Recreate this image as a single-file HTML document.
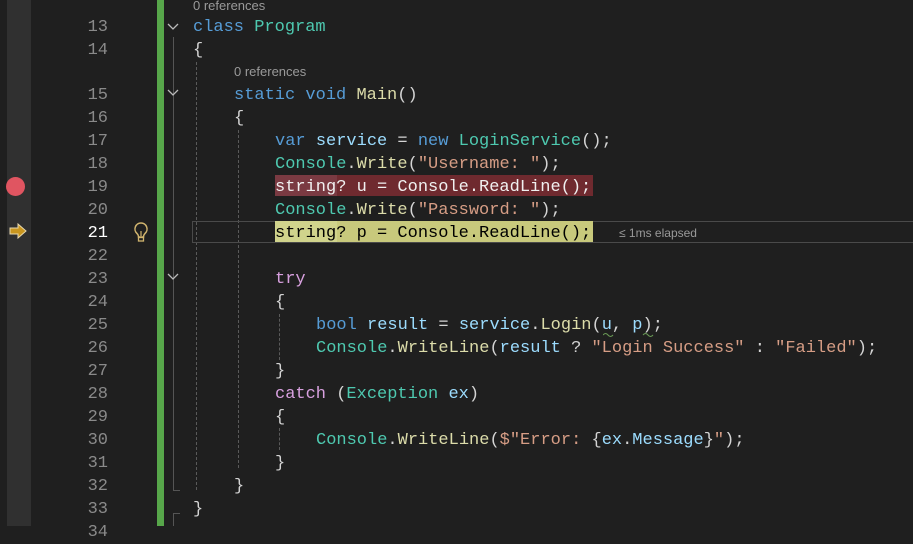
<!DOCTYPE html>
<html><head><meta charset="utf-8"><style>
html,body{margin:0;padding:0;width:913px;height:526px;overflow:hidden;background:#1f1f1f;}
.a{position:absolute}
.ln{position:absolute;left:60px;width:48px;text-align:right;font:17px/23px "Liberation Mono",monospace;color:#8a8a8a}
.c{position:absolute;font:17px/23px "Liberation Mono",monospace;color:#d4d4d4;white-space:pre}
.k{color:#569cd6}.t{color:#4ec9b0}.m{color:#dcdcaa}.s{color:#d69d85}.v{color:#9cdcfe}.p{color:#d8a0df}
.ref{position:absolute;font:13px "Liberation Sans",sans-serif;color:#9a9a9a}
.g{position:absolute;width:0;border-left:1px dashed #5a5a5a}
.chev{position:absolute;left:167px;width:12px;height:8px}
</style></head><body>
<div class="a" style="left:7px;top:0;width:24px;height:526px;background:#303030"></div>
<div class="a" style="left:157px;top:0;width:7px;height:526px;background:#57a64a"></div>

<div class="a" style="left:173px;top:37px;width:1px;height:454px;background:#555"></div>
<div class="a" style="left:173px;top:490px;width:7px;height:1px;background:#555"></div>
<div class="a" style="left:173px;top:513px;width:7px;height:1px;background:#555"></div>
<div class="a" style="left:173px;top:513px;width:1px;height:13px;background:#555"></div>

<svg class="chev" style="top:23px" viewBox="0 0 12 8"><path d="M1 1 L6 6 L11 1" fill="none" stroke="#bbb" stroke-width="1.3"/></svg>
<svg class="chev" style="top:89px" viewBox="0 0 12 8"><path d="M1 1 L6 6 L11 1" fill="none" stroke="#bbb" stroke-width="1.3"/></svg>
<svg class="chev" style="top:273px" viewBox="0 0 12 8"><path d="M1 1 L6 6 L11 1" fill="none" stroke="#bbb" stroke-width="1.3"/></svg>

<div class="g" style="left:196px;top:62px;height:428px"></div>
<div class="g" style="left:238px;top:130px;height:338px"></div>
<div class="g" style="left:279px;top:314px;height:46px"></div>
<div class="g" style="left:279px;top:428px;height:22px"></div>

<div class="a" style="left:6px;top:177px;width:19px;height:19px;border-radius:50%;background:#e05561"></div>
<svg class="a" style="left:9px;top:223px" width="19" height="16" viewBox="0 0 19 16"><path d="M1 5 H9 V1 L17 8 L9 15 V11 H1 Z" fill="#c9961f" stroke="#e8d9b0" stroke-width="1"/></svg>
<svg class="a" style="left:132px;top:221px" width="18" height="22" viewBox="0 0 18 22"><path d="M9 2 a6 6 0 0 0-4 10.5 c1 1 1.5 2 1.5 3.5 h5 c0-1.5 .5-2.5 1.5-3.5 A6 6 0 0 0 9 2z" fill="none" stroke="#d0b46e" stroke-width="1.5"/><rect x="6.5" y="16.5" width="5" height="3.5" fill="none" stroke="#d0b46e" stroke-width="1.3"/><path d="M9 15 V10" stroke="#d0b46e" stroke-width="1.2"/></svg>

<div class="a" style="left:192px;top:221px;width:730px;height:20px;border:1px solid #4a4a4a"></div>

<div class="a" style="left:275px;top:175px;width:318px;height:21px;background:#6f2a2f"></div>
<div class="a" style="left:275px;top:175px;width:62px;height:21px;background:#7a3a42"></div>
<div class="a" style="left:275px;top:221px;width:318px;height:21px;background:#c8c97c"></div>
<div class="a" style="left:275px;top:221px;width:62px;height:21px;background:#d0d38c"></div>

<div class="ref" style="left:193px;top:-2px">0 references</div>
<div class="ref" style="left:234px;top:64px">0 references</div>

<div class="ln" style="top:16px">13</div>
<div class="ln" style="top:39px">14</div>
<div class="ln" style="top:84px">15</div>
<div class="ln" style="top:107px">16</div>
<div class="ln" style="top:130px">17</div>
<div class="ln" style="top:153px">18</div>
<div class="ln" style="top:176px">19</div>
<div class="ln" style="top:199px">20</div>
<div class="ln" style="top:222px;color:#fff">21</div>
<div class="ln" style="top:245px">22</div>
<div class="ln" style="top:268px">23</div>
<div class="ln" style="top:291px">24</div>
<div class="ln" style="top:314px">25</div>
<div class="ln" style="top:337px">26</div>
<div class="ln" style="top:360px">27</div>
<div class="ln" style="top:383px">28</div>
<div class="ln" style="top:406px">29</div>
<div class="ln" style="top:429px">30</div>
<div class="ln" style="top:452px">31</div>
<div class="ln" style="top:475px">32</div>
<div class="ln" style="top:498px">33</div>
<div class="ln" style="top:521px">34</div>

<div class="c" style="left:193px;top:16px"><span class="k">class</span> <span class="t">Program</span></div>
<div class="c" style="left:193px;top:39px">{</div>
<div class="c" style="left:234px;top:84px"><span class="k">static</span> <span class="k">void</span> <span class="m">Main</span>()</div>
<div class="c" style="left:234px;top:107px">{</div>
<div class="c" style="left:275px;top:130px"><span class="k">var</span> <span class="v">service</span> = <span class="k">new</span> <span class="t">LoginService</span>();</div>
<div class="c" style="left:275px;top:153px"><span class="t">Console</span>.<span class="m">Write</span>(<span class="s">"Username: "</span>);</div>
<div class="c" style="left:275px;top:176px;color:#f0f0f0">string? u = Console.ReadLine();</div>
<div class="c" style="left:275px;top:199px"><span class="t">Console</span>.<span class="m">Write</span>(<span class="s">"Password: "</span>);</div>
<div class="c" style="left:275px;top:222px;color:#000">string? p = Console.ReadLine();</div>
<div class="ref" style="left:619px;top:226px;font-size:12px;color:#999">≤ 1ms elapsed</div>
<div class="c" style="left:275px;top:268px"><span class="p">try</span></div>
<div class="c" style="left:275px;top:291px">{</div>
<div class="c" style="left:316px;top:314px"><span class="k">bool</span> <span class="v">result</span> = <span class="v">service</span>.<span class="m">Login</span>(<span class="v">u</span>, <span class="v">p</span>);</div>
<div class="c" style="left:316px;top:337px"><span class="t">Console</span>.<span class="m">WriteLine</span>(<span class="v">result</span> ? <span class="s">"Login Success"</span> : <span class="s">"Failed"</span>);</div>
<div class="c" style="left:275px;top:360px">}</div>
<div class="c" style="left:275px;top:383px"><span class="p">catch</span> (<span class="t">Exception</span> <span class="v">ex</span>)</div>
<div class="c" style="left:275px;top:406px">{</div>
<div class="c" style="left:316px;top:429px"><span class="t">Console</span>.<span class="m">WriteLine</span>(<span class="s">$"Error: </span>{<span class="v">ex</span>.<span class="v">Message</span>}<span class="s">"</span>);</div>
<div class="c" style="left:275px;top:452px">}</div>
<div class="c" style="left:234px;top:475px">}</div>
<div class="c" style="left:193px;top:498px">}</div>

<svg class="a" style="left:603px;top:332px" width="60" height="5"><path d="M0 3 q2.5-3 5 0 t5 0" fill="none" stroke="#6a9955" stroke-width="1"/><path d="M40 3 q2.5-3 5 0 t5 0" fill="none" stroke="#6a9955" stroke-width="1"/></svg>
</body></html>
